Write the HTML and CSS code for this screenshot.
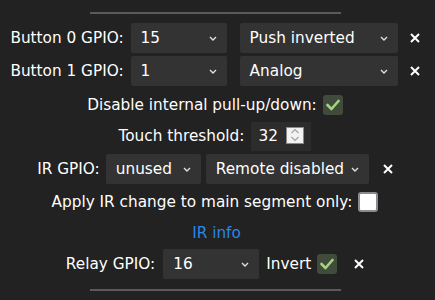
FILE: index.html
```html
<!DOCTYPE html>
<html>
<head>
<meta charset="utf-8">
<link rel="stylesheet" href="styles.css">
</head>
<body>
<div class="page">
  <div class="rule top"></div>

  <div class="row r1">
    <span class="label">Button 0 GPIO:</span>
    <div class="select w96 ml7"><span>15</span><svg class="chev" width="8" height="5" viewBox="0 0 8 5"><polyline points="1,1 4,4 7,1" fill="none" stroke="#e0e0e0" stroke-width="1.4"/></svg></div>
    <div class="select w158 ml13"><span>Push inverted</span><svg class="chev" width="8" height="5" viewBox="0 0 8 5"><polyline points="1,1 4,4 7,1" fill="none" stroke="#e0e0e0" stroke-width="1.4"/></svg></div>
    <svg class="x ml12" width="10" height="10" viewBox="0 0 10 10"><path d="M1 1L9 9M9 1L1 9" stroke="#fff" stroke-width="2"/></svg>
  </div>

  <div class="row r2">
    <span class="label">Button 1 GPIO:</span>
    <div class="select w96 ml7"><span>1</span><svg class="chev" width="8" height="5" viewBox="0 0 8 5"><polyline points="1,1 4,4 7,1" fill="none" stroke="#e0e0e0" stroke-width="1.4"/></svg></div>
    <div class="select w158 ml13"><span>Analog</span><svg class="chev" width="8" height="5" viewBox="0 0 8 5"><polyline points="1,1 4,4 7,1" fill="none" stroke="#e0e0e0" stroke-width="1.4"/></svg></div>
    <svg class="x ml12" width="10" height="10" viewBox="0 0 10 10"><path d="M1 1L9 9M9 1L1 9" stroke="#fff" stroke-width="2"/></svg>
  </div>

  <div class="row r3">
    <span class="label">Disable internal pull-up/down:</span>
    <span class="cb checked ml6"><svg width="14" height="12" viewBox="0 0 14 12"><polyline points="1.5,6 5.5,10 12.5,2" fill="none" stroke="#a3d37f" stroke-width="2.6" stroke-linecap="round" stroke-linejoin="round"/></svg></span>
  </div>

  <div class="row r4">
    <span class="label">Touch threshold:</span>
    <div class="number ml7"><span>32</span>
      <span class="spin"><svg width="16" height="16" viewBox="0 0 16 16"><polyline points="4.5,6 8,2.5 11.5,6" fill="none" stroke="#a0a0a0" stroke-width="1.1"/><polyline points="4.5,10 8,13.5 11.5,10" fill="none" stroke="#a0a0a0" stroke-width="1.1"/></svg></span>
    </div>
  </div>

  <div class="row r5">
    <span class="label">IR GPIO:</span>
    <div class="select w95 ml6"><span>unused</span><svg class="chev" width="8" height="5" viewBox="0 0 8 5"><polyline points="1,1 4,4 7,1" fill="none" stroke="#e0e0e0" stroke-width="1.4"/></svg></div>
    <div class="select w163 ml5"><span>Remote disabled</span><svg class="chev" width="8" height="5" viewBox="0 0 8 5"><polyline points="1,1 4,4 7,1" fill="none" stroke="#e0e0e0" stroke-width="1.4"/></svg></div>
    <svg class="x ml14" width="10" height="10" viewBox="0 0 10 10"><path d="M1 1L9 9M9 1L1 9" stroke="#fff" stroke-width="2"/></svg>
  </div>

  <div class="row r6">
    <span class="label">Apply IR change to main segment only:</span>
    <span class="cb empty ml6"></span>
  </div>

  <div class="row r7">
    <a class="link">IR info</a>
  </div>

  <div class="row r8">
    <span class="label">Relay GPIO:</span>
    <div class="select w96 ml8"><span>16</span><svg class="chev" width="8" height="5" viewBox="0 0 8 5"><polyline points="1,1 4,4 7,1" fill="none" stroke="#e0e0e0" stroke-width="1.4"/></svg></div>
    <span class="label ml7">Invert</span>
    <span class="cb checked ml6"><svg width="14" height="12" viewBox="0 0 14 12"><polyline points="1.5,6 5.5,10 12.5,2" fill="none" stroke="#a3d37f" stroke-width="2.6" stroke-linecap="round" stroke-linejoin="round"/></svg></span>
    <svg class="x ml17" width="10" height="10" viewBox="0 0 10 10"><path d="M1 1L9 9M9 1L1 9" stroke="#fff" stroke-width="2"/></svg>
  </div>

  <div class="rule bottom"></div>
</div>
</body>
</html>
```

FILE: styles.css
```css
html, body {
  margin: 0;
  padding: 0;
  background: #222;
}
body {
  width: 435px;
  height: 300px;
  overflow: hidden;
  font-family: "DejaVu Sans", sans-serif;
  font-size: 15.3px;
  color: #fff;
}
.page {
  width: 430px;
  display: flex;
  flex-direction: column;
  align-items: center;
}
.rule {
  width: 251px;
  height: 2px;
  background: #5a5a5a;
  margin-left: 1px;
}
.rule.top { margin-top: 12px; }
.rule.bottom { margin-top: 10px; }
.row {
  display: flex;
  align-items: center;
  justify-content: center;
  width: 100%;
  white-space: nowrap;
}
.r1 { margin-top: 7px; height: 33px; }
.r2 { height: 34px; }
.r3 { height: 33px; }
.r4 { height: 30px; }
.r5 { height: 36px; }
.r6 { height: 30px; }
.r7 { height: 31px; }
.r8 { height: 31px; }

.select {
  height: 30px;
  background: #333;
  border-radius: 2px;
  box-sizing: border-box;
  padding: 0 10px;
  display: flex;
  align-items: center;
  justify-content: space-between;
  color: #fff;
}
.chev { display: block; margin-top: 1px; }
.w95 { width: 95px; }
.w96 { width: 96px; }
.w158 { width: 158px; }
.w163 { width: 163px; }
.ml5 { margin-left: 5px; }
.ml6 { margin-left: 6px; }
.ml7 { margin-left: 7px; }
.ml8 { margin-left: 8px; }
.ml12 { margin-left: 12px; }
.ml13 { margin-left: 13px; }
.ml14 { margin-left: 14px; }
.ml17 { margin-left: 17px; }
.x { display: block; flex: none; }

.cb {
  width: 20px;
  height: 20px;
  box-sizing: border-box;
  border-radius: 3px;
  display: flex;
  align-items: center;
  justify-content: center;
  flex: none;
}
.cb.checked { background: #414b3b; }
.cb.empty {
  background: #fff;
  border: 2px solid #8a8a92;
}

.number {
  width: 60px;
  height: 29px;
  background: #2c2c2c;
  box-sizing: border-box;
  padding: 0 7px 0 7px;
  display: flex;
  align-items: center;
  justify-content: space-between;
}
.spin {
  width: 18px;
  height: 17px;
  box-sizing: border-box;
  background: #f2f2f2;
  border: 1px solid #8a8a8a;
  display: flex;
  align-items: center;
  justify-content: center;
  margin-top: -2px;
}
.spin svg { display: block; }
.link {
  color: #2a86e8;
  text-decoration: none;
  margin-left: 3px;
}
```
